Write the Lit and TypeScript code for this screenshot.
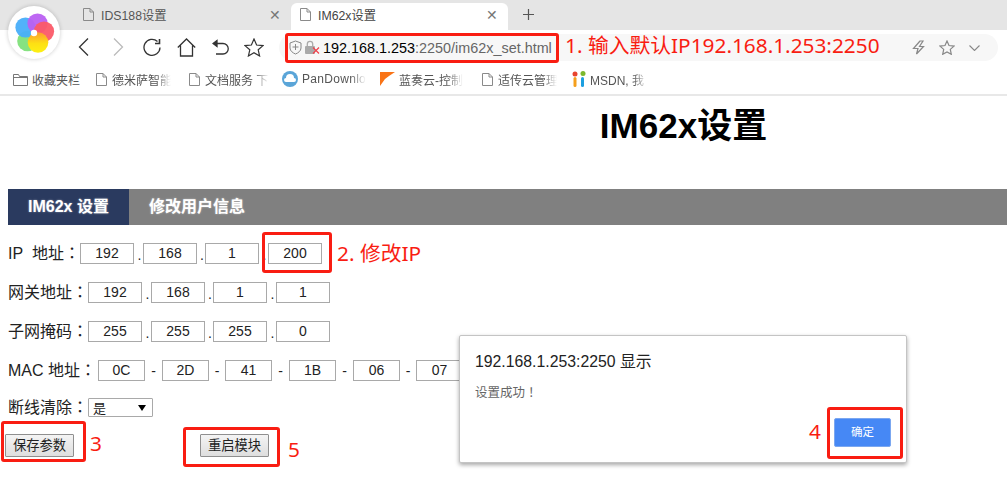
import { LitElement, html, css, svg } from "lit";
import { customElement } from "lit/decorators.js";

const doc = html`<svg class="ic" width="13" height="15" viewBox="0 0 13 15" fill="none" stroke="#8a8a8a"><path d="M1.5 1.5h6.5l3.5 3.5v8.500h-10z"/><path d="M8 1.500v3.500h3.500"/></svg>`;

const blades: [string, number, number][] = [
  ["#7fe07a", -6.5, 8],
  ["#48aefa", -8.5, -5.5],
  ["#bb60f2", 3.500, -9.5],
  ["#fb5a68", 10, -1.5],
  ["#fdd61c", 4, 9.500],
];

const logo = html`<svg width="42" height="42" viewBox="-21 -21 42 42">
  <defs><linearGradient id="y" x1="0" y1="0" x2="0" y2="1"><stop offset="0" stop-color="#fc9d30"/><stop offset=".55" stop-color="#fde014"/><stop offset="1" stop-color="#fdf014"/></linearGradient></defs>
  ${blades.map(
    ([c, x, y], i) => svg`<circle cx="${x}" cy="${y}" r="${Math.hypot(x, y)}" fill="${i === 4 ? "url(#y)" : c}" fill-opacity="${i === 4 ? 1 : 0.95}"/>`
  )}
  <circle r="3.200" fill="#fff"/>
</svg>`;

const colon = html`<span class="c">：</span>`;

@customElement("app-root")
export class AppRoot extends LitElement {
  static styles = css`
    :host { display: block; width: 1007px; height: 485px; position: relative; overflow: hidden; background: #fff; font-family: "Liberation Sans", "Noto Sans CJK SC", sans-serif; color: #111; }
    svg { display: block; flex: none; }
    .c { font-family: "Noto Sans CJK TC", sans-serif; }
    .tabs { height: 30px; background: #e5e5e5; display: flex; align-items: flex-end; padding-left: 72px; }
    .tab { width: 219px; height: 27px; display: flex; align-items: center; gap: 6px; padding: 0 10px 4px 10px; box-sizing: border-box; font-size: 12.300px; color: #555; }
    .tab.on { background: #fff; border-radius: 6px 6px 0 0; color: #444; width: 217px; padding-left: 8px; }
    .tab .t { flex: 1; }
    .tab .x { font-size: 14px; color: #777; line-height: 1; }
    .plus { margin-left: 14px; margin-bottom: 9px; }
    .toolbar { height: 34px; display: flex; align-items: center; padding-left: 67px; position: relative; }
    .nav { display: grid; grid-template-columns: repeat(6, 34px); justify-items: center; align-items: center; width: 212px; flex: none; }
    .addr { width: 719px; height: 27px; background: #f7f7f7; border-radius: 14px; display: flex; align-items: center; padding-left: 10px; box-sizing: border-box; font-size: 14.400px; margin-top: 1px; }
    .url { color: #000; }
    .url span { color: #666; }
    .right { margin-left: auto; display: flex; gap: 14px; align-items: center; padding-right: 18px; }
    .marks { height: 30px; display: flex; align-items: center; padding-left: 13px; border-bottom: 2px solid #e8e8e8; box-sizing: content-box; font-size: 12px; color: #555; }
    .mark { display: flex; align-items: center; gap: 4px; flex: none; }
    .mark .lbl { white-space: nowrap; overflow: hidden; -webkit-mask-image: linear-gradient(90deg, #000 75%, transparent); mask-image: linear-gradient(90deg, #000 75%, transparent); }
    .page { position: relative; }
    h1 { margin: 0; font-size: 35px; line-height: 40px; padding: 10px 0 43px 360px; text-align: center; font-weight: 700; color: #000; }
    .nb { margin-left: 8px; height: 36px; background: #808080; display: flex; color: #fff; font-weight: 700; font-size: 16px; line-height: 36px; }
    .nb div { text-shadow: 0 0 2px rgba(255,255,255,.5); }
    .nb .act { width: 121px; background: #2a3a5f; text-align: center; }
    .nb .oth { padding-left: 20px; }
    .form { padding: 18px 0 0 8px; font-size: 16px; color: #222; }
    .row { height: 21px; margin-bottom: 18px; display: flex; align-items: center; white-space: nowrap; }
    .lab { flex: none; padding-bottom: 3px; line-height: 17px; height: 17px; }
    .lab.l1 { width: 72px; }
    .lab.l2 { width: 80px; }
    .lab.l3 { width: 90px; }
    .ip { width: 54px; height: 21px; box-sizing: border-box; border: 1px solid #a9a9a9; text-align: center; font-size: 14px; line-height: 19px; color: #222; flex: none; }
    .ip.m { width: 47px; }
    .sep { width: 9px; flex: none; text-align: center; font-size: 14px; padding: 4px 0 0 2px; box-sizing: border-box; line-height: 17px; }
    .sep.n { width: 8px; }
    .dash { width: 17px; flex: none; text-align: center; font-size: 14px; }
    .dash.s { width: 16px; }
    .sel { width: 65px; height: 19px; box-sizing: border-box; border: 1px solid #a9a9a9; display: flex; align-items: center; justify-content: space-between; padding: 0 6px 0 4px; font-size: 13px; border-radius: 1px; }
    .sel i { width: 0; height: 0; border: 4px solid transparent; border-top: 6px solid #000; border-bottom: 0; }
    .row.s { height: 19px; margin-bottom: 17px; margin-top: -1px; }
    .btns { display: flex; margin-left: -3px; gap: 126px; }
    .btn { width: 69px; height: 23px; box-sizing: border-box; border: 1px solid #8f8f8f; border-radius: 1px; background: linear-gradient(#f4f4f4, #dedede); font-size: 13.300px; text-align: center; line-height: 21px; color: #222; }
    .dialog { position: absolute; left: 459px; top: 335px; width: 448px; height: 128px; box-sizing: border-box; background: #fff; border: 1px solid #c4c4c4; border-radius: 2px; box-shadow: 0 2px 4px rgba(0,0,0,.35); padding: 17px 15px 0 15px; }
    .dialog .h { font-size: 15.800px; line-height: 18px; color: #222; }
    .dialog .m { font-size: 12.500px; line-height: 16px; color: #666; margin-top: 13px; }
    .ok { position: absolute; left: 374px; top: 82px; width: 57px; height: 29px; background: #4688f5; border-radius: 2px; border: 1px solid #7ba7f0; box-sizing: border-box; color: #fff; font-size: 11.500px; text-align: center; line-height: 27px; }
    .box { position: absolute; border: 3px solid #f91d12; border-radius: 3px; box-sizing: border-box; pointer-events: none; }
    .note { position: absolute; color: #f91d12; font-size: 20.800px; line-height: 24px; white-space: nowrap; font-family: "Noto Sans", "Noto Sans CJK SC", sans-serif; }
    .logo { position: absolute; left: 8px; top: 6px; width: 52px; height: 53px; background: #fff; border-radius: 50%; box-shadow: 0 0 4px rgba(0,0,0,.2); display: flex; align-items: center; justify-content: center; }
  `;

  private ip(vals: string[]) {
    return vals.map(
      (v, i) => html`${i ? html`<span class="sep ${i === 2 ? "n" : ""}">.</span>` : ""}<span class="ip">${v}</span>`
    );
  }

  render() {
    const stroke = "#333";
    return html`
      <div class="tabs">
        <div class="tab">${doc}<span class="t">IDS188设置</span><span class="x">✕</span></div>
        <div class="tab on">${doc}<span class="t">IM62x设置</span><span class="x">✕</span></div>
        <svg class="plus" width="13" height="13" viewBox="0 0 13 13" stroke="#555" stroke-width="1.200"><path d="M6.500 1v11M1 6.500h11"/></svg>
      </div>
      <div class="toolbar">
        <div class="nav">
          <svg width="12" height="20" viewBox="0 0 12 20" fill="none" stroke="${stroke}" stroke-width="1.300"><path d="M10 1.500 1.500 10l8.500 8.500"/></svg>
          <svg width="12" height="20" viewBox="0 0 12 20" fill="none" stroke="#bbb" stroke-width="1.300"><path d="m2 1.500 8.500 8.500L2 18.500"/></svg>
          <svg width="18" height="18" viewBox="0 0 18 18" fill="none" stroke="${stroke}" stroke-width="1.300"><path d="M14.500 3.500A8 8 0 1 0 17 9.500"/><path d="M16.500 1v4.500H12" stroke-width="1.600"/></svg>
          <svg width="19" height="19" viewBox="0 0 19 19" fill="none" stroke="${stroke}" stroke-width="1.300"><path d="M.8 9.500 9.500 1l8.700 8.500M3.500 7.500v10.500h12V7.500"/></svg>
          <svg width="17" height="17" viewBox="0 0 17 17" fill="none" stroke="${stroke}" stroke-width="1.300"><path d="M3 4.500h8a5 5 0 0 1 0 10.500H4"/><path d="M5 1.500 1 4.500l4 3z" fill="#333"/></svg>
          <svg width="20" height="19" viewBox="0 0 20 19" fill="none" stroke="${stroke}" stroke-width="1.200"><path d="m10 1 2.600 6 6.400.6-4.800 4.200 1.400 6.200L10 14.800 4.400 18l1.400-6.200L1 7.600 7.400 7z"/></svg>
        </div>
        <div class="addr">
          <svg width="13" height="15" viewBox="0 0 13 15" fill="none" stroke="#888"><path d="M6.500 1 12 3v5c0 3-3 5-5.500 6C4 13 1 11 1 8V3z"/><path d="M3.500 7h6M6.500 4v6"/></svg>
          <svg style="margin-left:3px" width="18" height="15" viewBox="0 0 18 15"><rect x="0" y="6" width="10" height="8" rx="1" fill="#aaa"/><path d="M2.300 6V4a2.700 2.700 0 0 1 5.400 0v2" fill="none" stroke="#aaa" stroke-width="1.300"/><path d="m8 7.500 6 6m0-6-6 6" stroke="#f0404a" stroke-width="1.200"/></svg>
          <div class="url">192.168.1.253<span>:2250/im62x_set.html</span></div>
          <div class="right">
            <svg width="13" height="15" viewBox="0 0 13 15" fill="none" stroke="#888" stroke-width="1.200"><path d="M8 1 1.500 8.500H6L4.500 14l7-7.500H7.500L11 1z"/></svg>
            <svg width="16" height="15" viewBox="0 0 16 15" fill="none" stroke="#888" stroke-width="1.200"><path d="m8 1 2 4.500 5 .6-3.700 3.300 1 4.900L8 11.900 3.700 14.300l1-4.900L1 6.100l5-.6z"/></svg>
            <svg width="11" height="6" viewBox="0 0 11 6" fill="none" stroke="#888" stroke-width="1.100"><path d="m.5.500 5 5 5-5"/></svg>
          </div>
        </div>
      </div>
      <div class="marks">
        <div class="mark" style="width:82px"><svg width="15" height="13" viewBox="0 0 15 13" fill="none" stroke="#777"><path d="M.5 12.500V1.500h5l1 2h8v9z"/><path d="M.5 4.500h14"/></svg>收藏夹栏</div>
        <div class="mark" style="width:93px">${doc}<span class="lbl" style="width:59px">德米萨智能</span></div>
        <div class="mark" style="width:94px">${doc}<span class="lbl" style="width:64px">文档服务 下</span></div>
        <div class="mark" style="width:98px"><svg width="16" height="16" viewBox="0 0 16 16"><circle cx="8" cy="8" r="8" fill="#5aa5d8"/><path d="M4 11a2 2 0 0 1 0-4 4 4 0 0 1 8 0 2 2 0 0 1 0 4z" fill="#fff"/></svg><span class="lbl" style="width:64px;letter-spacing:.3px">PanDownlo</span></div>
        <div class="mark" style="width:101px"><svg width="15" height="14" viewBox="0 0 15 14"><path d="M0 0h15L9 4 5 7 0 14z" fill="#f97316"/></svg><span class="lbl" style="width:64px">蓝奏云-控制</span></div>
        <div class="mark" style="width:91px">${doc}<span class="lbl" style="width:59px">适传云管理</span></div>
        <div class="mark"><svg width="14" height="16" viewBox="0 0 14 16"><circle cx="3" cy="3" r="2.500" fill="#e8442e"/><circle cx="11" cy="2.500" r="2.500" fill="#7cb82f"/><rect x="1.500" y="6" width="3" height="10" rx="1.500" fill="#f59f1c"/><rect x="9" y="6" width="3" height="10" rx="1.500" fill="#1c9fe0"/></svg><span class="lbl" style="width:58px">MSDN, 我</span></div>
      </div>
      <div class="page">
        <h1>IM62x设置</h1>
        <div class="nb"><div class="act">IM62x 设置</div><div class="oth">修改用户信息</div></div>
        <div class="form">
          <div class="row"><span class="lab l1">IP&nbsp; 地址${colon}</span>${this.ip(["192", "168", "1", "200"])}</div>
          <div class="row"><span class="lab l2">网关地址${colon}</span>${this.ip(["192", "168", "1", "1"])}</div>
          <div class="row"><span class="lab l2">子网掩码${colon}</span>${this.ip(["255", "255", "255", "0"])}</div>
          <div class="row"><span class="lab l3">MAC 地址${colon}</span>${["0C", "2D", "41", "1B", "06", "07"].map(
            (v, i) => html`${i ? html`<span class="dash ${i === 2 || i === 5 ? "s" : ""}">-</span>` : ""}<span class="ip m">${v}</span>`
          )}</div>
          <div class="row s"><span class="lab l2">断线清除${colon}</span><span class="sel">是<i></i></span></div>
          <div class="btns"><div class="btn">保存参数</div><div class="btn">重启模块</div></div>
        </div>
      </div>
      <div class="logo">${logo}</div>
      <div class="dialog">
        <div class="h">192.168.1.253:2250 显示</div>
        <div class="m">设置成功<span class="c">！</span></div>
        <div class="ok">确定</div>
      </div>
      <div class="box" style="left:285px;top:33px;width:274px;height:30px"></div>
      <div class="box" style="left:262px;top:232px;width:70px;height:41px"></div>
      <div class="box" style="left:1px;top:421px;width:85px;height:41px"></div>
      <div class="box" style="left:183px;top:427px;width:97px;height:40px"></div>
      <div class="box" style="left:827px;top:407px;width:76px;height:52px"></div>
      <div class="note" style="left:565px;top:33px">1. 输入默认IP192.168.1.253:2250</div>
      <div class="note" style="left:337px;top:241px">2. 修改IP</div>
      <div class="note" style="left:90px;top:431px">3</div>
      <div class="note" style="left:809px;top:419px">4</div>
      <div class="note" style="left:288px;top:437px">5</div>
    `;
  }
}
